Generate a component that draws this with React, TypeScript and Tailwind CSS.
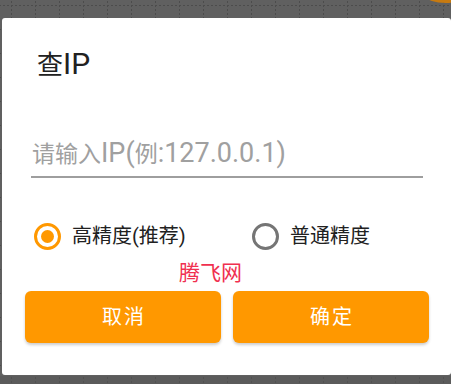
import React from "react";

const font = { fontFamily: 'Roboto, "Noto Sans CJK SC", sans-serif' };

function Radio({ checked, children }: { checked: boolean; children: React.ReactNode }) {
  return (
    <div className="flex items-center">
      <div
        className={
          checked
            ? "w-[27px] h-[27px] rounded-full border-[3px] border-[#ff9800] flex items-center justify-center"
            : "w-[27px] h-[27px] rounded-full border-[3px] border-[#757575] flex items-center justify-center"
        }
      >
        {checked && <div className="w-[13px] h-[13px] rounded-full bg-[#ff9800]" />}
      </div>
      <span className="ml-[11px] text-[20px] leading-[28px] text-[#212121]">{children}</span>
    </div>
  );
}

export default function App() {
  return (
    <div className="relative w-[451px] h-[384px] overflow-hidden bg-[#606060]" style={font}>
      <svg className="absolute inset-0" width="451" height="384">
        <defs>
          <pattern id="g" x="11" y="5" width="24" height="24" patternUnits="userSpaceOnUse">
            <line x1="0.5" y1="0" x2="0.5" y2="24" stroke="#4c4c4c" strokeWidth="1" strokeDasharray="2 2" />
            <line x1="0" y1="0.5" x2="24" y2="0.5" stroke="#4c4c4c" strokeWidth="1" strokeDasharray="2 2" />
          </pattern>
        </defs>
        <rect width="451" height="384" fill="url(#g)" />
        <rect x="0" y="376" width="451" height="8" fill="#555555" opacity="0.5" />
        <ellipse cx="446" cy="-4" rx="20" ry="7" fill="#c77a10" />
      </svg>
      <div className="relative pt-[18px] pl-[2px]">
        <div className="w-[449px] h-[357px] bg-white rounded-[3px] flex flex-col">
          <div className="mt-[29px] ml-[35px] h-[34px] flex items-baseline text-[#212121]">
            <span className="text-[26px] leading-[34px]">查</span>
            <span className="text-[30px] leading-[34px]">IP</span>
          </div>
          <div className="mt-[56px] ml-[29px] w-[392px]">
            <div className="h-[32px] flex items-baseline text-[#a0a0a0] pl-[1px]">
              <span className="text-[23px] leading-[32px]">请输入</span>
              <span className="text-[27px] leading-[32px]">IP(</span>
              <span className="text-[23px] leading-[32px]">例</span>
              <span className="text-[27px] leading-[32px]">:127.0.0.1)</span>
            </div>
            <div className="mt-[7px] h-[2px] bg-[#9e9e9e]" />
          </div>
          <div className="mt-[44px] ml-[32px] flex items-center">
            <div className="w-[218px]">
              <Radio checked={true}>高精度(推荐)</Radio>
            </div>
            <Radio checked={false}>普通精度</Radio>
          </div>
          <div className="mt-[10px] ml-[177px] text-[21px] leading-[26px] text-[#f0304f]">腾飞网</div>
          <div className="mt-[5px] ml-[23px] flex gap-[12px]">
            <button className="w-[196px] h-[52px] rounded-[6px] bg-[#ff9800] text-white text-[20px] tracking-[2px] shadow-[0_2px_3px_rgba(0,0,0,0.2)] pl-[2px]">
              取消
            </button>
            <button className="w-[196px] h-[52px] rounded-[6px] bg-[#ff9800] text-white text-[20px] tracking-[2px] shadow-[0_2px_3px_rgba(0,0,0,0.2)] pl-[2px]">
              确定
            </button>
          </div>
        </div>
      </div>
    </div>
  );
}
